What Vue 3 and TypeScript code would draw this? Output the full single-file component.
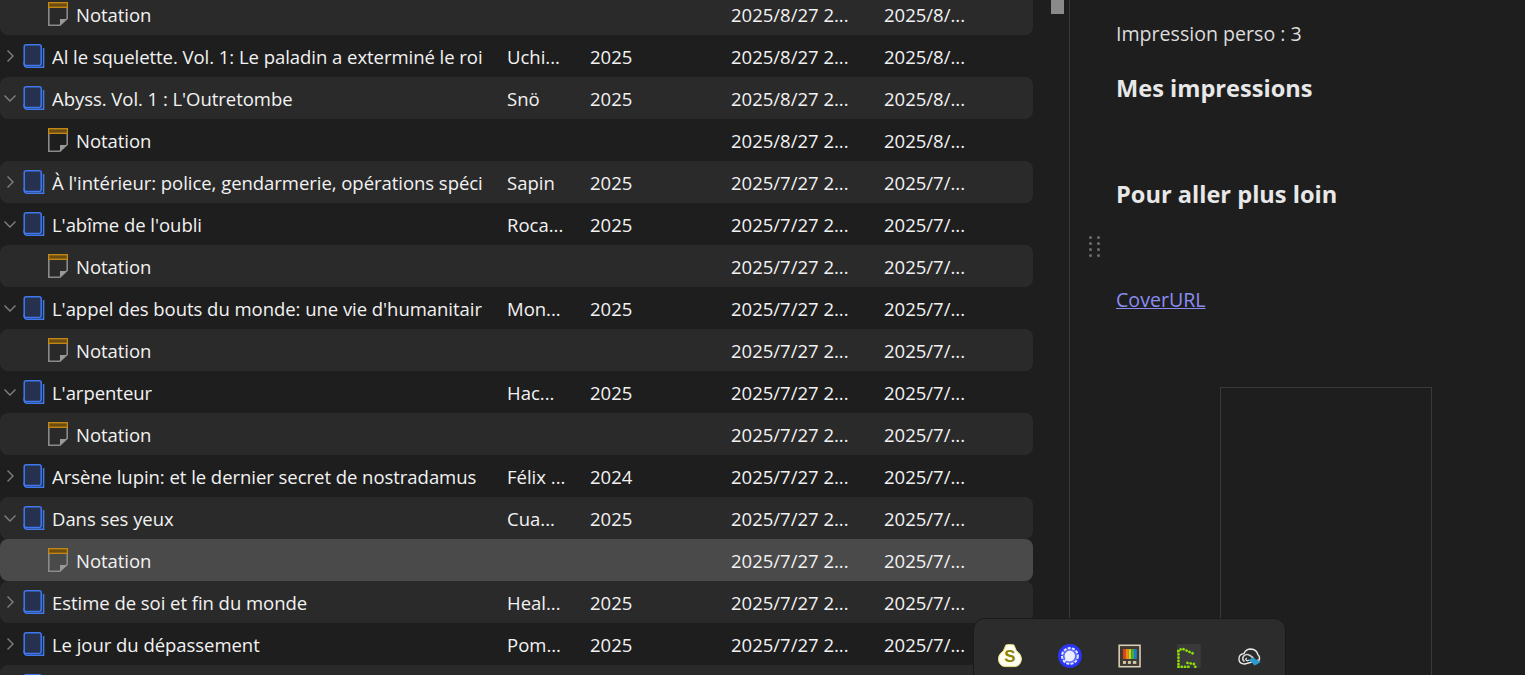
<script setup lang="ts">
interface Row {
  name: string
  author?: string
  year?: string
  created: string
  modified: string
  kind: 'book' | 'note'
  open?: boolean
  active?: boolean
}

const aug = '2025/8/27 2...'
const jul = '2025/7/27 2...'
const augM = '2025/8/...'
const julM = '2025/7/...'

const note = (created: string, modified: string, active = false): Row => ({
  name: 'Notation',
  created,
  modified,
  kind: 'note',
  active,
})
const book = (name: string, author: string, year: string, created: string, modified: string, open = false): Row => ({
  name,
  author,
  year,
  created,
  modified,
  kind: 'book',
  open,
})

const rows: Row[] = [
  note(aug, augM),
  book('Al le squelette. Vol. 1: Le paladin a exterminé le roi', 'Uchi...', '2025', aug, augM),
  book("Abyss. Vol. 1 : L'Outretombe", 'Snö', '2025', aug, augM, true),
  note(aug, augM),
  book("À l'intérieur: police, gendarmerie, opérations spéci", 'Sapin', '2025', jul, julM),
  book("L'abîme de l'oubli", 'Roca...', '2025', jul, julM, true),
  note(jul, julM),
  book("L'appel des bouts du monde: une vie d'humanitair", 'Mon...', '2025', jul, julM, true),
  note(jul, julM),
  book("L'arpenteur", 'Hac...', '2025', jul, julM, true),
  note(jul, julM),
  book('Arsène lupin: et le dernier secret de nostradamus', 'Félix ...', '2024', jul, julM),
  book('Dans ses yeux', 'Cua...', '2025', jul, julM, true),
  note(jul, julM, true),
  book('Estime de soi et fin du monde', 'Heal...', '2025', jul, julM),
  book('Le jour du dépassement', 'Pom...', '2025', jul, julM),
  book('', '', '', '', ''),
]
</script>

<template>
  <div class="page">
    <section class="list">
      <div class="rows">
        <div
          v-for="(row, i) in rows"
          :key="i"
          class="row"
          :class="{ striped: i % 2 === 0, active: row.active }"
        >
          <div class="name-cell" :class="{ child: row.kind === 'note' }">
            <svg v-if="row.kind === 'book'" class="chevron" width="12" height="12" viewBox="0 0 12 12">
              <path v-if="row.open" d="M.5 3.5 L6 9 L11.5 3.5" />
              <path v-else d="M3.5 .5 L9 6 L3.5 11.5" />
            </svg>
            <svg v-if="row.kind === 'book'" class="icon" width="22" height="24" viewBox="0 0 22 24">
              <path class="book-back" d="M1.2 18 V20 Q1.2 23.3 4.5 23.3 H20.6 V4" />
              <rect class="book-front" x="1.2" y="0.8" width="17" height="20.6" rx="2" />
            </svg>
            <svg v-else class="icon" width="20" height="24" viewBox="0 0 20 24">
              <path class="note-body" d="M.8 3 V23.2 H12 L19.2 16.5 V3" />
              <path class="note-fold" d="M12 23 V17 H19 Z" />
              <rect class="note-top" x="0.6" y="0.7" width="18.8" height="4.6" />
            </svg>
            <span class="name">{{ row.name }}</span>
          </div>
          <div class="author">{{ row.author }}</div>
          <div class="year">{{ row.year }}</div>
          <div class="created">{{ row.created }}</div>
          <div class="modified">{{ row.modified }}</div>
        </div>
      </div>
      <div class="scrollbar"><div class="thumb"></div></div>
    </section>

    <section class="detail">
      <div class="grip">
        <span v-for="n in 8" :key="n"></span>
      </div>
      <p class="prop">Impression perso : 3</p>
      <h2 class="first">Mes impressions</h2>
      <h2 class="second">Pour aller plus loin</h2>
      <a class="link" href="#">CoverURL</a>
      <div class="cover"></div>
    </section>

    <div class="tray">
      <svg width="24" height="24" viewBox="0 0 24 24">
        <path d="M8 .8 Q12 0 16 .8 Q17.5 4 18.5 6.5 Q24 11 23.7 15 Q23 22 17 22.7 H7 Q1 22 .3 15 Q0 11 5.5 6.5 Q6.5 4 8 .8 Z" fill="#fffef2" stroke="#e8de7a" />
        <text x="12" y="18.5" text-anchor="middle" class="s-glyph">S</text>
      </svg>
      <svg width="24" height="24" viewBox="0 0 24 24">
        <circle cx="12" cy="12" r="12" fill="#2b35f5" />
        <circle cx="12" cy="12" r="8" fill="#5f6bf8" stroke="#e4e6ff" stroke-width="2" stroke-dasharray="3 1.4" />
        <path d="M12 6.5 A5.5 5.5 0 1 1 9 16.8 L6.8 17.5 L7.4 15 A5.5 5.5 0 0 1 12 6.5 Z" fill="#eceeff" />
      </svg>
      <svg width="24" height="24" viewBox="0 0 24 24">
        <rect x="1.2" y="1.2" width="21" height="21.6" fill="#3e3a30" stroke="#d8cdb5" stroke-width="1.6" />
        <rect x="5" y="5" width="2.8" height="10" fill="#e2401a" />
        <rect x="7.8" y="5" width="2.8" height="10" fill="#ef8a12" />
        <rect x="10.6" y="5" width="2.8" height="10" fill="#d4cf1c" />
        <rect x="13.4" y="5" width="2.8" height="10" fill="#3fb03a" />
        <rect x="16.2" y="5" width="2.8" height="10" fill="#1a7fd0" />
        <rect x="5" y="17" width="3" height="3" fill="#cfc4ac" />
        <rect x="10" y="17" width="3" height="3" fill="#cfc4ac" />
        <rect x="15" y="17" width="3.5" height="3" fill="#cfc4ac" />
      </svg>
      <svg width="24" height="24" viewBox="0 0 24 24">
        <rect width="24" height="24" fill="#3a3a3a" />
        <path d="M.8 7 L5 4.5 L18.5 10.5 M1.5 7 V22 M1.5 23 H12 M10.5 19 L17 20 L18.5 23" fill="none" stroke="#8ee000" stroke-width="2.7" stroke-linecap="round" stroke-dasharray="0.1 3.2" />
      </svg>
      <svg width="24" height="24" viewBox="0 0 24 24">
        <path d="M6.5 20 Q1.8 19.5 2 14.5 Q2.3 10 7 9.6 Q9 5 14 5 Q19.8 5.4 21 10.5 Q23.4 12.5 22.5 16 L8 20 Z" fill="none" stroke="#e8e8e8" stroke-width="1.4" />
        <path d="M7.5 17.6 Q4.4 14.8 6.8 12 Q9.5 9.3 13 11.4 L16.5 14" fill="none" stroke="#cfcfcf" stroke-width="1.7" />
        <path d="M9.8 14 Q8 15 9.6 16.4 Q11 17 12.5 16" fill="none" stroke="#e8e8e8" stroke-width="1.3" />
        <path d="M11.5 16 L16.5 13.5 L19 15.5 L24 17.8 L20 20.5 L17.5 21.5 L15.5 19 Z" fill="#2a9bd1" />
      </svg>
    </div>
  </div>
</template>

<style>
html,
body {
  margin: 0;
  height: 100%;
  overflow: hidden;
  background: #1e1e1e;
}
</style>

<style scoped>
.page {
  position: relative;
  display: flex;
  width: 1525px;
  height: 675px;
  overflow: hidden;
  background: #1e1e1e;
  color: #f2f2f2;
  font-family: "Open Sans", "Noto Sans", sans-serif;
  font-size: 18.5px;
}

.list {
  display: flex;
  width: 1069px;
  height: 675px;
  flex: none;
  border-right: 1px solid #3a3a3a;
}

.rows {
  width: 1033px;
  flex: none;
  margin-top: -7px;
}

.row {
  display: flex;
  align-items: center;
  height: 42px;
  border-radius: 8px;
  white-space: nowrap;
}

.row.striped {
  background: #2a2a2a;
}

.row.active {
  background: #4a4a4a;
}

.name-cell {
  display: flex;
  align-items: center;
  width: 507px;
  flex: none;
  overflow: hidden;
}

.name-cell.child {
  padding-left: 48px;
  box-sizing: border-box;
}

.chevron {
  flex: none;
  margin-left: 4px;
  margin-right: 7px;
}

.chevron path {
  fill: none;
  stroke: #808080;
  stroke-width: 1.4;
}

.icon {
  flex: none;
  margin-right: 7px;
}

.child .icon {
  margin-right: 8px;
}

.book-back {
  fill: none;
  stroke: #4078f0;
  stroke-width: 1.5;
}

.book-front {
  fill: #26314e;
  stroke: #4078f0;
  stroke-width: 1.5;
}

.note-body {
  fill: none;
  stroke: #8a8a8a;
  stroke-width: 1.6;
}

.note-fold {
  fill: #9a9a9a;
}

.note-top {
  fill: #6a4c14;
  stroke: #c98a12;
  stroke-width: 1.3;
}

.name {
  overflow: hidden;
  letter-spacing: -0.04px;
}

.author {
  width: 83px;
  flex: none;
}

.year {
  width: 141px;
  flex: none;
}

.created {
  width: 153px;
  flex: none;
}

.scrollbar {
  width: 36px;
  flex: none;
  position: relative;
}

.thumb {
  position: absolute;
  left: 18px;
  top: 0;
  width: 13px;
  height: 14px;
  background: #8a8a8a;
}

.detail {
  position: relative;
  flex: 1;
  padding-left: 46px;
  color: #dcdcdc;
  font-size: 19.6px;
}

.grip {
  position: absolute;
  left: 19px;
  top: 236px;
  display: grid;
  grid-template-columns: 3px 3px;
  gap: 3px 5px;
}

.grip span {
  width: 3px;
  height: 3px;
  border-radius: 50%;
  background: #6e6e6e;
}

.prop {
  margin: 20px 0 0;
  line-height: 27px;
}

h2 {
  margin: 0;
  font-size: 23.6px;
  font-weight: 700;
  line-height: 30px;
  color: #e8e8e8;
}

h2.first {
  margin-top: 26px;
}

h2.second {
  margin-top: 76px;
}

.link {
  display: block;
  width: fit-content;
  margin-top: 79px;
  color: #8a8cf0;
  line-height: 24px;
}

.cover {
  width: 210px;
  height: 320px;
  margin: 75px 0 0 104px;
  border: 1px solid #3a3a3a;
}

.tray {
  position: absolute;
  left: 973px;
  top: 618px;
  display: flex;
  gap: 36px;
  width: 313px;
  height: 80px;
  box-sizing: border-box;
  padding: 25px 24px 0;
  background: #2c2c2c;
  border: 1px solid #1a1a1a;
  border-radius: 12px;
}

.s-glyph {
  fill: #8f8000;
  font-family: "Liberation Sans", sans-serif;
  font-size: 17px;
  font-weight: 700;
}
</style>
